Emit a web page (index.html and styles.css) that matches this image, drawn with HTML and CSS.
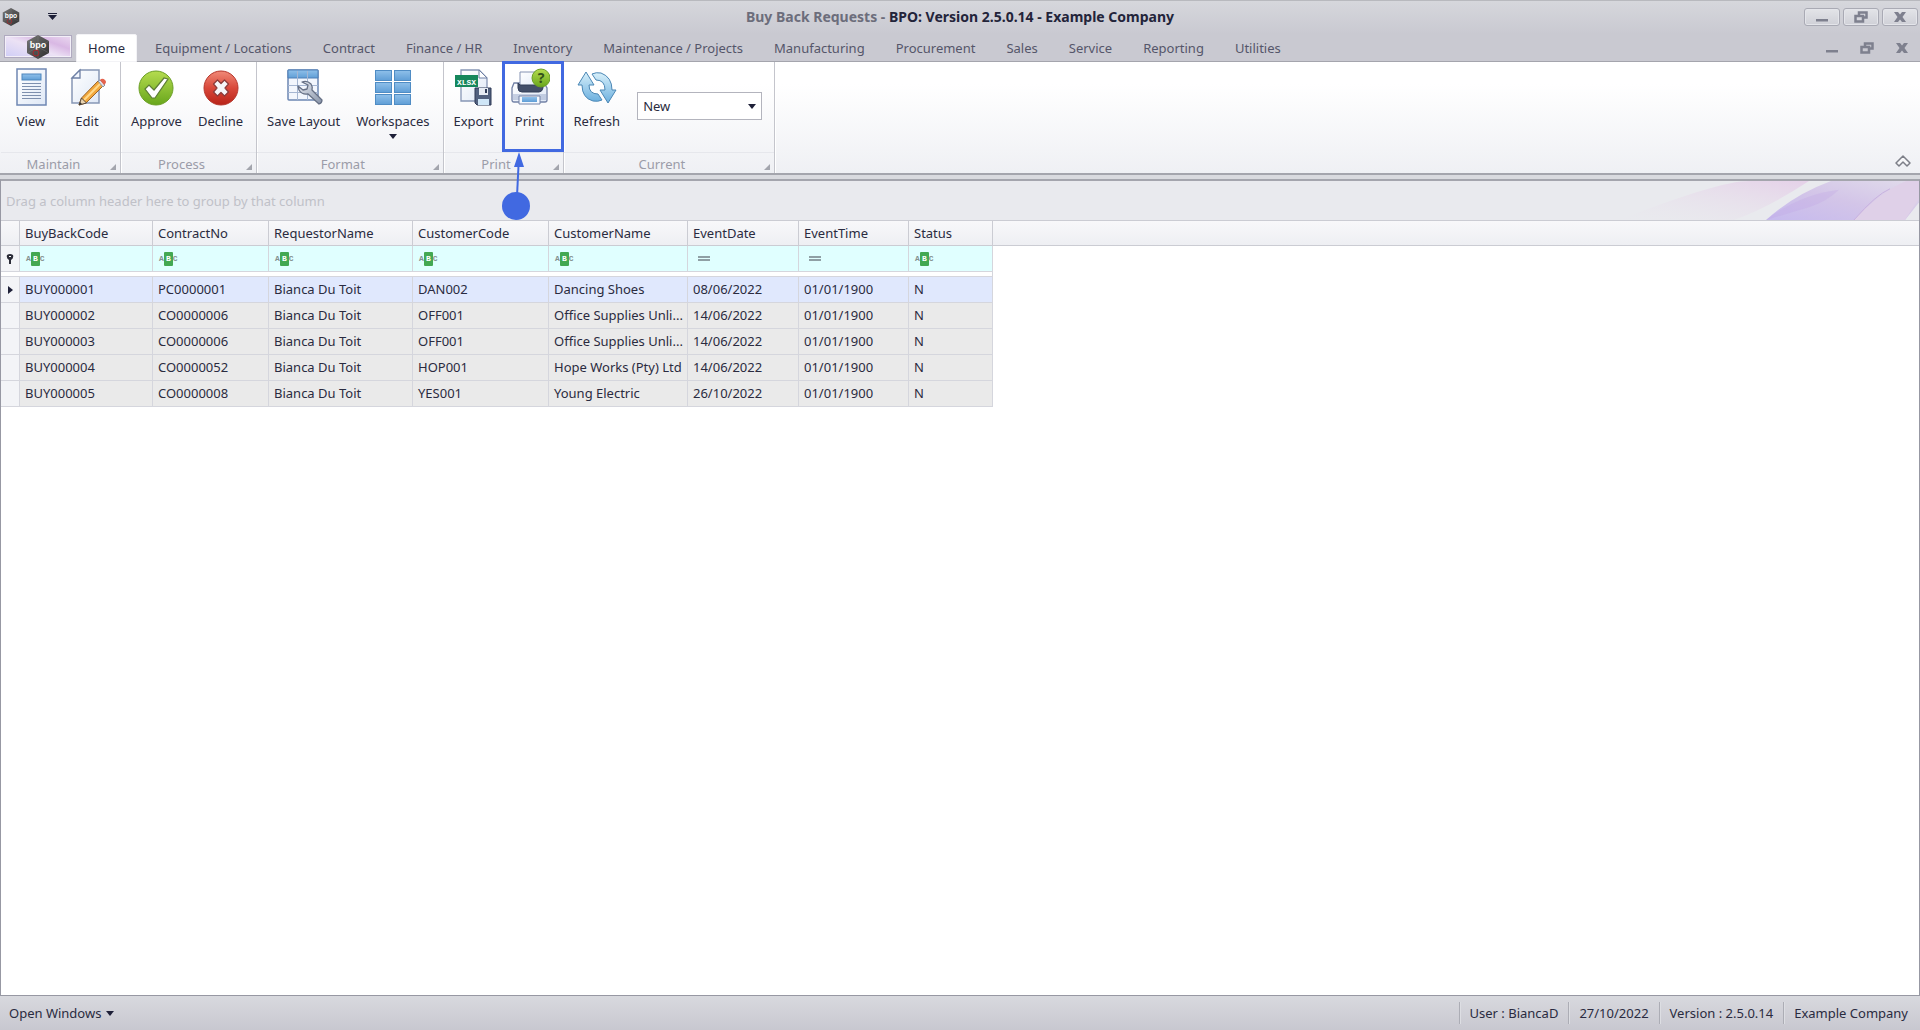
FILE: index.html
```html
<!DOCTYPE html>
<html lang="en">
<head>
<meta charset="utf-8">
<title>Buy Back Requests - BPO</title>
<link rel="stylesheet" href="styles.css">
</head>
<body>
<svg class="defs" aria-hidden="true">
  <defs>
    <linearGradient id="blue" x1="0" y1="0" x2="0" y2="1"><stop offset="0" stop-color="#8fc0ea"/><stop offset="1" stop-color="#5f9ed6"/></linearGradient>
    <linearGradient id="page" x1="0" y1="0" x2="1" y2="1"><stop offset="0" stop-color="#ffffff"/><stop offset="1" stop-color="#dfe8f6"/></linearGradient>
    <linearGradient id="green" x1="0" y1="0" x2="0" y2="1"><stop offset="0" stop-color="#b5dc4f"/><stop offset="1" stop-color="#68a61c"/></linearGradient>
    <linearGradient id="red" x1="0" y1="0" x2="0" y2="1"><stop offset="0" stop-color="#f08a78"/><stop offset=".5" stop-color="#d9483a"/><stop offset="1" stop-color="#b82318"/></linearGradient>
    <linearGradient id="steel" x1="0" y1="0" x2="1" y2="1"><stop offset="0" stop-color="#e8ecf3"/><stop offset="1" stop-color="#8793a8"/></linearGradient>
    <linearGradient id="sky" x1="0" y1="0" x2="0" y2="1"><stop offset="0" stop-color="#d8f0fa"/><stop offset="1" stop-color="#6cb0df"/></linearGradient>
    <linearGradient id="hex" x1="0" y1="0" x2="1" y2="1"><stop offset="0" stop-color="#777777"/><stop offset="1" stop-color="#2e2e2e"/></linearGradient>
    <linearGradient id="pink" x1="0" y1="1" x2="1" y2="0"><stop offset="0" stop-color="#e9e3ec" stop-opacity="0"/><stop offset="1" stop-color="#e3c6e6"/></linearGradient>
    <linearGradient id="violet" x1="0" y1="1" x2="1" y2="0"><stop offset="0" stop-color="#c6baee"/><stop offset=".5" stop-color="#d3c5e8"/><stop offset="1" stop-color="#e1dceb"/></linearGradient>
    <symbol id="logo" viewBox="0 0 24 26">
      <path d="M12 1 23 7v12l-11 6L1 19V7z" fill="url(#hex)"/>
      <path d="M12 1v24M1 7l22 12M23 7 1 19" stroke="#8a8a8a" stroke-opacity=".3"/>
      <text x="12" y="14" text-anchor="middle" class="logo-text">bpo</text>
      <circle cx="10" cy="19" r="3" fill="none" stroke="#a8282c"/>
    </symbol>
    <symbol id="restore" viewBox="0 0 14 12"><path d="M5 5V1.500h7.500v5H9M1.500 5h7.500v5.500H1.500z" fill="none" stroke="#7e808e" stroke-width="2.500"/></symbol>
    <symbol id="minimise" viewBox="0 0 14 12"><path d="M1 8h12v2.500H1z" fill="#7e808e"/></symbol>
    <symbol id="close" viewBox="0 0 14 12"><path d="M1 1h4l2 2.500L9 1h4L9.500 6l3.500 5H9L7 8.500 5 11H1l3.500-5z" fill="#7e808e"/></symbol>
    <symbol id="down" viewBox="0 0 8 5"><path d="M0 0h8L4 5z" fill="#1e2038"/></symbol>
    <symbol id="corner" viewBox="0 0 6 6"><path d="M6 0v6H0z" fill="#a3a5ad"/></symbol>
  </defs>
</svg>

<header class="titlebar">
  <div class="quick">
    <svg class="quick-logo"><use href="#logo"/></svg>
    <button class="plain" aria-label="Customise quick access"><svg width="9" height="7" viewBox="0 0 9 7"><path d="M0 0h9v1H0zM0 2h9L4.500 7z" fill="#1e2038"/></svg></button>
  </div>
  <h1 class="title"><span class="title-doc">Buy Back Requests -</span> BPO: Version 2.5.0.14 - Example Company</h1>
  <div class="window-buttons">
    <button class="win" aria-label="Minimise"><svg><use href="#minimise"/></svg></button>
    <button class="win" aria-label="Restore"><svg><use href="#restore"/></svg></button>
    <button class="win" aria-label="Close"><svg><use href="#close"/></svg></button>
  </div>
</header>

<nav class="tabs">
  <button class="app-button" aria-label="Application menu"><svg class="app-logo"><use href="#logo"/></svg></button>
  <a class="tab active" href="#">Home</a>
  <a class="tab" href="#">Equipment / Locations</a>
  <a class="tab" href="#">Contract</a>
  <a class="tab" href="#">Finance / HR</a>
  <a class="tab" href="#">Inventory</a>
  <a class="tab" href="#">Maintenance / Projects</a>
  <a class="tab" href="#">Manufacturing</a>
  <a class="tab" href="#">Procurement</a>
  <a class="tab" href="#">Sales</a>
  <a class="tab" href="#">Service</a>
  <a class="tab" href="#">Reporting</a>
  <a class="tab" href="#">Utilities</a>
  <div class="child-buttons">
    <button class="plain" aria-label="Minimise document"><svg><use href="#minimise"/></svg></button>
    <button class="plain" aria-label="Restore document"><svg><use href="#restore"/></svg></button>
    <button class="plain" aria-label="Close document"><svg><use href="#close"/></svg></button>
  </div>
</nav>

<div class="ribbon">
  <section class="group">
    <div class="tools">
      <button class="tool"><svg class="icon" viewBox="0 0 40 40"><rect x="6" y="2" width="29" height="36" fill="url(#page)" stroke="#6f87b3" stroke-width="1.500"/><rect x="11" y="7" width="19" height="6" fill="url(#blue)" stroke="#4e86bd"/><path d="M11 16.500h19M11 19.500h19M11 22.500h19M11 25.500h19M11 28.500h19M11 31.500h19" stroke="#7d8fae"/></svg>View</button>
      <button class="tool"><svg class="icon" viewBox="0 0 40 40"><path d="M13 3h19v33H5V11z" fill="url(#page)" stroke="#8796b5" stroke-width="1.500"/><path d="M13 3v8H5z" fill="#f4f8ff" stroke="#6f80a5" stroke-width="1.300"/><path d="m12 38 2.500-7L31 14l5 5-17 17z" fill="#f2a73c" stroke="#9a6428"/><path d="m17 33 17-17" stroke="#ffd98b" stroke-width="2"/><path d="m31 14 2-1 5 5-2 2z" fill="#dfe3ea" stroke="#8b93a2"/><path d="m33 13 1-1q2-1 4 1t0 4l-1 1z" fill="#e5634e"/><path d="m12 38 2.500-7 5 5z" fill="#e9d3b0" stroke="#5a4a3a"/><path d="m12 38 1-3 2 2z" fill="#333"/></svg>Edit</button>
    </div>
    <div class="caption"><span>Maintain</span><svg class="corner"><use href="#corner"/></svg></div>
  </section>
  <section class="group">
    <div class="tools">
      <button class="tool"><svg class="icon" viewBox="0 0 40 40"><circle cx="20" cy="21" r="17" fill="url(#green)" stroke="#6b9f25"/><path d="m9 22 4-4 5 5 10-12 4 1-13 19h-3z" fill="#fff" stroke="#5d7d35" stroke-width="1.200"/></svg>Approve</button>
      <button class="tool"><svg class="icon" viewBox="0 0 40 40"><circle cx="20" cy="21" r="17" fill="url(#red)" stroke="#b6362c"/><path d="m12.500 17 4-4 3.500 3.500 3.500-3.500 4 4-3.500 4 3.500 4-4 4-3.500-3.500-3.500 3.500-4-4 3.500-4z" fill="#f6f6f8" stroke="#8b3a38" stroke-width="1.200" stroke-linejoin="round"/></svg>Decline</button>
    </div>
    <div class="caption"><span>Process</span><svg class="corner"><use href="#corner"/></svg></div>
  </section>
  <section class="group">
    <div class="tools">
      <button class="tool"><svg class="icon" viewBox="0 0 40 40"><rect x="4" y="3" width="30" height="30" rx="1" fill="#f2f6fd" stroke="#6c86b2" stroke-width="1.500"/><path d="M4 3h30v8H4z" fill="url(#blue)" stroke="#4e80b8"/><path d="M4 18.500h30M4 25.500h30M13.500 4v29M23.500 4v29" stroke="#a5b6d2"/><path d="M18 15q5-2 9 2 2 3 1 6l10 10q0 3-3 4L24 27q-6 1-9-4l-1-4 5 4 4-1 1-4z" fill="url(#steel)" stroke="#667085" stroke-width="1.300" stroke-linejoin="round"/></svg>Save Layout</button>
      <button class="tool"><svg class="icon" viewBox="0 0 40 40"><g fill="url(#blue)" stroke="#4f8cc4"><rect x="2.500" y="3.500" width="16" height="10"/><rect x="21.500" y="3.500" width="16" height="10"/><rect x="2.500" y="15.500" width="16" height="10"/><rect x="21.500" y="15.500" width="16" height="10"/><rect x="2.500" y="27.500" width="16" height="10"/><rect x="21.500" y="27.500" width="16" height="10"/></g></svg>Workspaces<svg class="arrow"><use href="#down"/></svg></button>
    </div>
    <div class="caption"><span>Format</span><svg class="corner"><use href="#corner"/></svg></div>
  </section>
  <section class="group">
    <div class="tools">
      <button class="tool"><svg class="icon" viewBox="0 0 40 40"><path d="M7 3h18l8 8v23H7z" fill="url(#page)" stroke="#8796b5" stroke-width="1.300"/><path d="M25 3v8h8z" fill="#fff" stroke="#6f80a5"/><rect x="1" y="8" width="23" height="12" fill="#16875c"/><text x="12.500" y="17.500" text-anchor="middle" class="xlsx-text">XLSX</text><path d="M21 21h16v17H23l-2-2z" fill="#52617f" stroke="#2f3b57"/><path d="M25 21h9v7h-9z" fill="#e6ebf3"/><path d="M31 22h2v4h-2z" fill="#2f3b57"/><path d="M24 32h11v6H24z" fill="#cfe6f7"/></svg>Export</button>
      <button class="tool"><svg class="icon" viewBox="0 0 40 40"><path d="M4 16h30l3 5v12q0 2-2 2H4q-2 0-2-2V21z" fill="url(#page)" stroke="#7382a6" stroke-width="1.300"/><path d="M10 5h21v17H10z" fill="url(#page)" stroke="#8492b2"/><path d="M8 16l2 2h21l2-2v5q-1 4-4 4H12q-4 0-4-4z" fill="#434f69" stroke="#333e58"/><path d="M2.500 27h34v6h-34z" fill="#a9b6d2" fill-opacity=".6"/><path d="M9 29h21v8H9z" fill="#f5f9ff" stroke="#7282a6"/><path d="M12 30h15v5H12z" fill="url(#blue)"/><circle cx="31" cy="11" r="9" fill="url(#green)" stroke="#6b9f25"/><text x="31" y="16" text-anchor="middle" class="help-text">?</text></svg>Print
        <svg class="callout" viewBox="0 0 62 160"><rect x="1.500" y="1.500" width="59" height="88" fill="none" stroke="#4169e1" stroke-width="3"/><path d="m15 135 1.500-30" stroke="#4169e1" stroke-width="2"/><path d="m17 91 5 15H12z" fill="#4169e1"/><circle cx="14" cy="145" r="14" fill="#4169e1"/></svg></button>
    </div>
    <div class="caption"><span>Print</span><svg class="corner"><use href="#corner"/></svg></div>
  </section>
  <section class="group">
    <div class="tools">
      <button class="tool"><svg class="icon" viewBox="0 0 40 40"><g fill="url(#sky)" stroke="#4b87b5" stroke-linejoin="round"><path d="M9 5 1 18h4q0 13 11 16 5 1 9-1l-4-6q-9 0-9-9h5z"/><path d="m31 36 8-13h-4q0-13-11-17-5-1-9 1l4 6q9 0 9 10h-5z"/></g></svg>Refresh</button>
      <label class="status-box"><select aria-label="Current status"><option>New</option></select><svg class="arrow"><use href="#down"/></svg></label>
    </div>
    <div class="caption"><span>Current</span><svg class="corner"><use href="#corner"/></svg></div>
  </section>
  <button class="plain collapse" aria-label="Collapse ribbon"><svg width="16" height="12" viewBox="0 0 16 12"><path d="m8 1 7 7-3 3-4-4-4 4-3-3z" fill="#f7f7f9" stroke="#7d7f88" stroke-width="1.500" stroke-linejoin="round"/></svg></button>
</div>

<main class="content">
  <div class="group-panel">
    <span>Drag a column header here to group by that column</span>
    <svg class="swirl" viewBox="0 0 320 40" preserveAspectRatio="none"><path d="M20 40Q120 0 150 0h60q-40 27-75 40z" fill="url(#pink)" opacity=".7"/><path d="M167 40Q195 14 232 0h88v22l-14 18z" fill="url(#violet)"/><path d="M167 40Q200 14 240 9q-12 12-30 18z" fill="#bfa4e6" opacity=".3"/><path d="M255 40q25-28 52-40h13v18l-14 22z" fill="#dfd0e8"/><path d="M255 40q22-26 36-32" fill="none" stroke="#c8b0de" stroke-width="1"/></svg>
  </div>
  <table class="grid">
    <colgroup><col class="c-mark"><col class="c-code"><col class="c-contract"><col class="c-requestor"><col class="c-customer"><col class="c-name"><col class="c-date"><col class="c-time"><col class="c-status"><col></colgroup>
    <thead>
      <tr><th></th><th>BuyBackCode</th><th>ContractNo</th><th>RequestorName</th><th>CustomerCode</th><th>CustomerName</th><th>EventDate</th><th>EventTime</th><th>Status</th><th></th></tr>
    </thead>
    <tbody>
      <tr class="filter">
        <td class="mark"><svg width="8" height="10" viewBox="0 0 8 10"><path d="M1 1q3-2 6 0 1 3-2 5v4H3V6Q0 4 1 1z" fill="#2b2c38"/><path d="M3 2h2v1H3z" fill="#fff"/></svg></td>
        <td><div class="cond"><span class="abc">A<b>B</b>C</span><input aria-label="Filter BuyBackCode"></div></td>
        <td><div class="cond"><span class="abc">A<b>B</b>C</span><input aria-label="Filter ContractNo"></div></td>
        <td><div class="cond"><span class="abc">A<b>B</b>C</span><input aria-label="Filter RequestorName"></div></td>
        <td><div class="cond"><span class="abc">A<b>B</b>C</span><input aria-label="Filter CustomerCode"></div></td>
        <td><div class="cond"><span class="abc">A<b>B</b>C</span><input aria-label="Filter CustomerName"></div></td>
        <td><div class="cond"><span class="equals"></span><input aria-label="Filter EventDate"></div></td>
        <td><div class="cond"><span class="equals"></span><input aria-label="Filter EventTime"></div></td>
        <td><div class="cond"><span class="abc">A<b>B</b>C</span><input aria-label="Filter Status"></div></td>
        <td></td>
      </tr>
      <tr class="divider"><td colspan="9"></td><td></td></tr>
      <tr class="selected"><td class="mark"><svg width="5" height="8" viewBox="0 0 5 8"><path d="M0 0v8l5-4z" fill="#1e2038"/></svg></td><td>BUY000001</td><td>PC0000001</td><td>Bianca Du Toit</td><td>DAN002</td><td>Dancing Shoes</td><td>08/06/2022</td><td>01/01/1900</td><td>N</td><td></td></tr>
      <tr><td class="mark"></td><td>BUY000002</td><td>CO0000006</td><td>Bianca Du Toit</td><td>OFF001</td><td>Office Supplies Unli...</td><td>14/06/2022</td><td>01/01/1900</td><td>N</td><td></td></tr>
      <tr><td class="mark"></td><td>BUY000003</td><td>CO0000006</td><td>Bianca Du Toit</td><td>OFF001</td><td>Office Supplies Unli...</td><td>14/06/2022</td><td>01/01/1900</td><td>N</td><td></td></tr>
      <tr><td class="mark"></td><td>BUY000004</td><td>CO0000052</td><td>Bianca Du Toit</td><td>HOP001</td><td>Hope Works (Pty) Ltd</td><td>14/06/2022</td><td>01/01/1900</td><td>N</td><td></td></tr>
      <tr><td class="mark"></td><td>BUY000005</td><td>CO0000008</td><td>Bianca Du Toit</td><td>YES001</td><td>Young Electric</td><td>26/10/2022</td><td>01/01/1900</td><td>N</td><td></td></tr>
    </tbody>
  </table>
</main>

<footer class="statusbar">
  <button class="plain open-windows">Open Windows <svg class="arrow"><use href="#down"/></svg></button>
  <span class="info">User : BiancaD</span>
  <span class="info">27/10/2022</span>
  <span class="info">Version : 2.5.0.14</span>
  <span class="info">Example Company</span>
</footer>
</body>
</html>
```
FILE: styles.css
```css
* { box-sizing: border-box; }

body {
  margin: 0;
  min-height: 100vh;
  display: flex;
  flex-direction: column;
  background: #fff;
  color: #2a2b40;
  font: 13px/18px "Noto Sans", "Open Sans", sans-serif;
}

button, input, select { font: inherit; color: inherit; }
svg { display: block; }
.defs { position: absolute; width: 0; height: 0; }
.plain { border: 0; padding: 0; background: none; }

/* Title bar */
.titlebar {
  display: grid;
  grid-template-columns: 1fr auto 1fr;
  align-items: center;
  height: 34px;
  padding: 0 2px 2px;
  border-top: 1px solid #b8b9be;
  background: linear-gradient(#d6d7dc, #c9c9d1);
}
.quick { display: flex; align-items: center; gap: 28px; }
.quick-logo { width: 18px; height: 20px; }
.logo-text { font: bold 9px "Liberation Sans", sans-serif; fill: #fff; }
.title { margin: 0; font-size: 14px; line-height: 18px; font-weight: bold; color: #23243a; }
.title-doc { color: #6c6d7b; }
.window-buttons { display: flex; justify-content: flex-end; gap: 3px; }
.win {
  display: grid;
  place-items: center;
  width: 36px;
  height: 18px;
  padding: 0;
  border: 1px solid #a9aab4;
  border-radius: 3px;
  background: linear-gradient(#e3e4e8, #cfd0d7);
  box-shadow: inset 0 0 0 1px #e4e5ea;
}
.win svg, .child-buttons svg { width: 14px; height: 12px; }

/* Ribbon tabs */
.tabs {
  display: flex;
  gap: 5px;
  height: 28px;
  padding: 0 11px 0 4px;
  border-bottom: 1px solid #a4a5ad;
  background: #c9c9d1;
}
.app-button {
  display: grid;
  place-items: center;
  width: 68px;
  height: 23px;
  margin-top: 1px;
  padding: 0;
  border: 1px solid #b0aac0;
  background: linear-gradient(20deg, #cfcdf6, #ece2f5 45%, #d9b8e4 70%, #ead9f0);
  box-shadow: inset 0 0 0 1px #f3eff8;
}
.app-logo { width: 24px; height: 26px; margin: -2px 0; }
.tab {
  padding: 5px 13px 3px;
  color: #55566a;
  text-decoration: none;
  white-space: nowrap;
}
.tab.active {
  margin-left: -1px;
  margin-bottom: -1px;
  border: 1px solid #f3f3f6;
  border-radius: 2px 2px 0 0;
  padding: 4px 11px 3px;
  background: #fff;
  color: #2a2b40;
}
.child-buttons { display: flex; align-items: center; gap: 21px; margin-left: auto; }

/* Ribbon */
.ribbon {
  display: flex;
  height: 113px;
  padding-left: 1px;
  border-bottom: 2px solid #a4a5ad;
  background: linear-gradient(#fff 20%, #eff0f4);
}
.group { display: flex; flex-direction: column; border-right: 1px solid #c4c5cc; box-shadow: 1px 0 #fff; }
.tools { display: flex; flex: 1; gap: 2px; padding: 0 6px 0 3px; }
.tool {
  position: relative;
  display: flex;
  flex-direction: column;
  align-items: center;
  min-width: 54px;
  padding: 5px 7px 0;
  border: 0;
  background: none;
  white-space: nowrap;
}
.icon { width: 40px; height: 40px; margin-bottom: 5px; }
.arrow { width: 8px; height: 5px; }
.tool .arrow { margin-top: 4px; }
.xlsx-text { font: bold 8px "Liberation Mono", monospace; fill: #fff; }
.help-text { font: bold 14px "Noto Sans", sans-serif; fill: #33511a; }
.callout { position: absolute; z-index: 1; left: -1px; top: -1px; width: 62px; height: 160px; }
.caption {
  display: flex;
  align-items: flex-end;
  gap: 4px;
  height: 21px;
  padding-right: 4px;
  border-top: 1px solid #e6e7ec;
  color: #9b9ca8;
}
.caption span { flex: 1; text-align: center; }
.corner { width: 6px; height: 6px; margin-bottom: 3px; }
.status-box { position: relative; align-self: flex-start; width: 125px; margin: 30px 6px 0 8px; }
.status-box select {
  display: block;
  width: 100%;
  height: 28px;
  padding: 0 5px;
  border: 1px solid #b3b4bd;
  border-radius: 0;
  background: #fff;
  appearance: none;
}
.status-box .arrow { position: absolute; right: 6px; top: 12px; }
.collapse { align-self: flex-end; margin: 0 9px 6px auto; }

/* Grid area */
.content {
  flex: 1;
  margin-top: 4px;
  border: 1px solid #9798a3;
  border-top: 2px solid #a4a5ad;
  box-shadow: 0 -4px #d9dadf;
}
.group-panel {
  display: flex;
  align-items: center;
  justify-content: space-between;
  height: 39px;
  padding-left: 5px;
  background: #e9eaee;
  color: #c0c1c8;
}
.swirl { width: 320px; height: 39px; }
.grid { width: 100%; table-layout: fixed; border-collapse: separate; border-spacing: 0; }
.c-mark { width: 19px; }
.c-code { width: 133px; }
.c-contract { width: 116px; }
.c-requestor { width: 144px; }
.c-customer { width: 136px; }
.c-name { width: 139px; }
.c-date { width: 111px; }
.c-time { width: 110px; }
.c-status { width: 84px; }
.grid th {
  height: 26px;
  padding: 0 5px 1px;
  border: solid #cbccd3;
  border-width: 1px 1px 1px 0;
  background: linear-gradient(#f8f8fa, #eeeff3);
  font-weight: normal;
  text-align: left;
}
.grid td {
  height: 26px;
  padding: 0 0 2px 5px;
  border: solid #d5d6dd;
  border-width: 0 1px 1px 0;
  background: #eaeaea;
  white-space: nowrap;
  overflow: hidden;
}
.grid .selected td { background: #e0e8fd; }
.grid .filter td { padding-bottom: 0; background: #e0ffff; }
.grid td.mark, .grid .filter .mark, .grid .selected .mark { padding: 0; background: #f3f4f7; }
.mark svg { margin: 0 auto; }
.grid .divider td { height: 5px; padding: 0; background: #fff; line-height: 0; }
.grid tr td:last-child, .grid .filter td:last-child, .grid .selected td:last-child { border: 0; background: #fff; }
.grid th:last-child { border-right: 0; }
.cond { display: flex; align-items: center; gap: 4px; padding-left: 1px; }
.cond input { flex: 1; min-width: 0; height: 20px; border: 0; padding: 0; background: none; }
.abc { display: flex; align-items: center; font: bold 8px/14px "Liberation Mono", monospace; color: #84908f; }
.abc b { width: 9px; background: #43a852; color: #fff; text-align: center; border-radius: 1px; }
.equals { width: 12px; height: 5px; margin-left: 4px; border: solid #8fa0a5; border-width: 2px 0; }

/* Status bar */
.statusbar {
  display: flex;
  align-items: center;
  height: 34px;
  padding: 0 2px 0 9px;
  background: linear-gradient(#d8d9de, #c8c8d0);
}
.open-windows { display: flex; align-items: center; gap: 5px; margin-right: auto; }
.info { padding: 2px 10px; border-left: 1px solid #acadb5; box-shadow: inset 1px 0 #dddee3; }
```
